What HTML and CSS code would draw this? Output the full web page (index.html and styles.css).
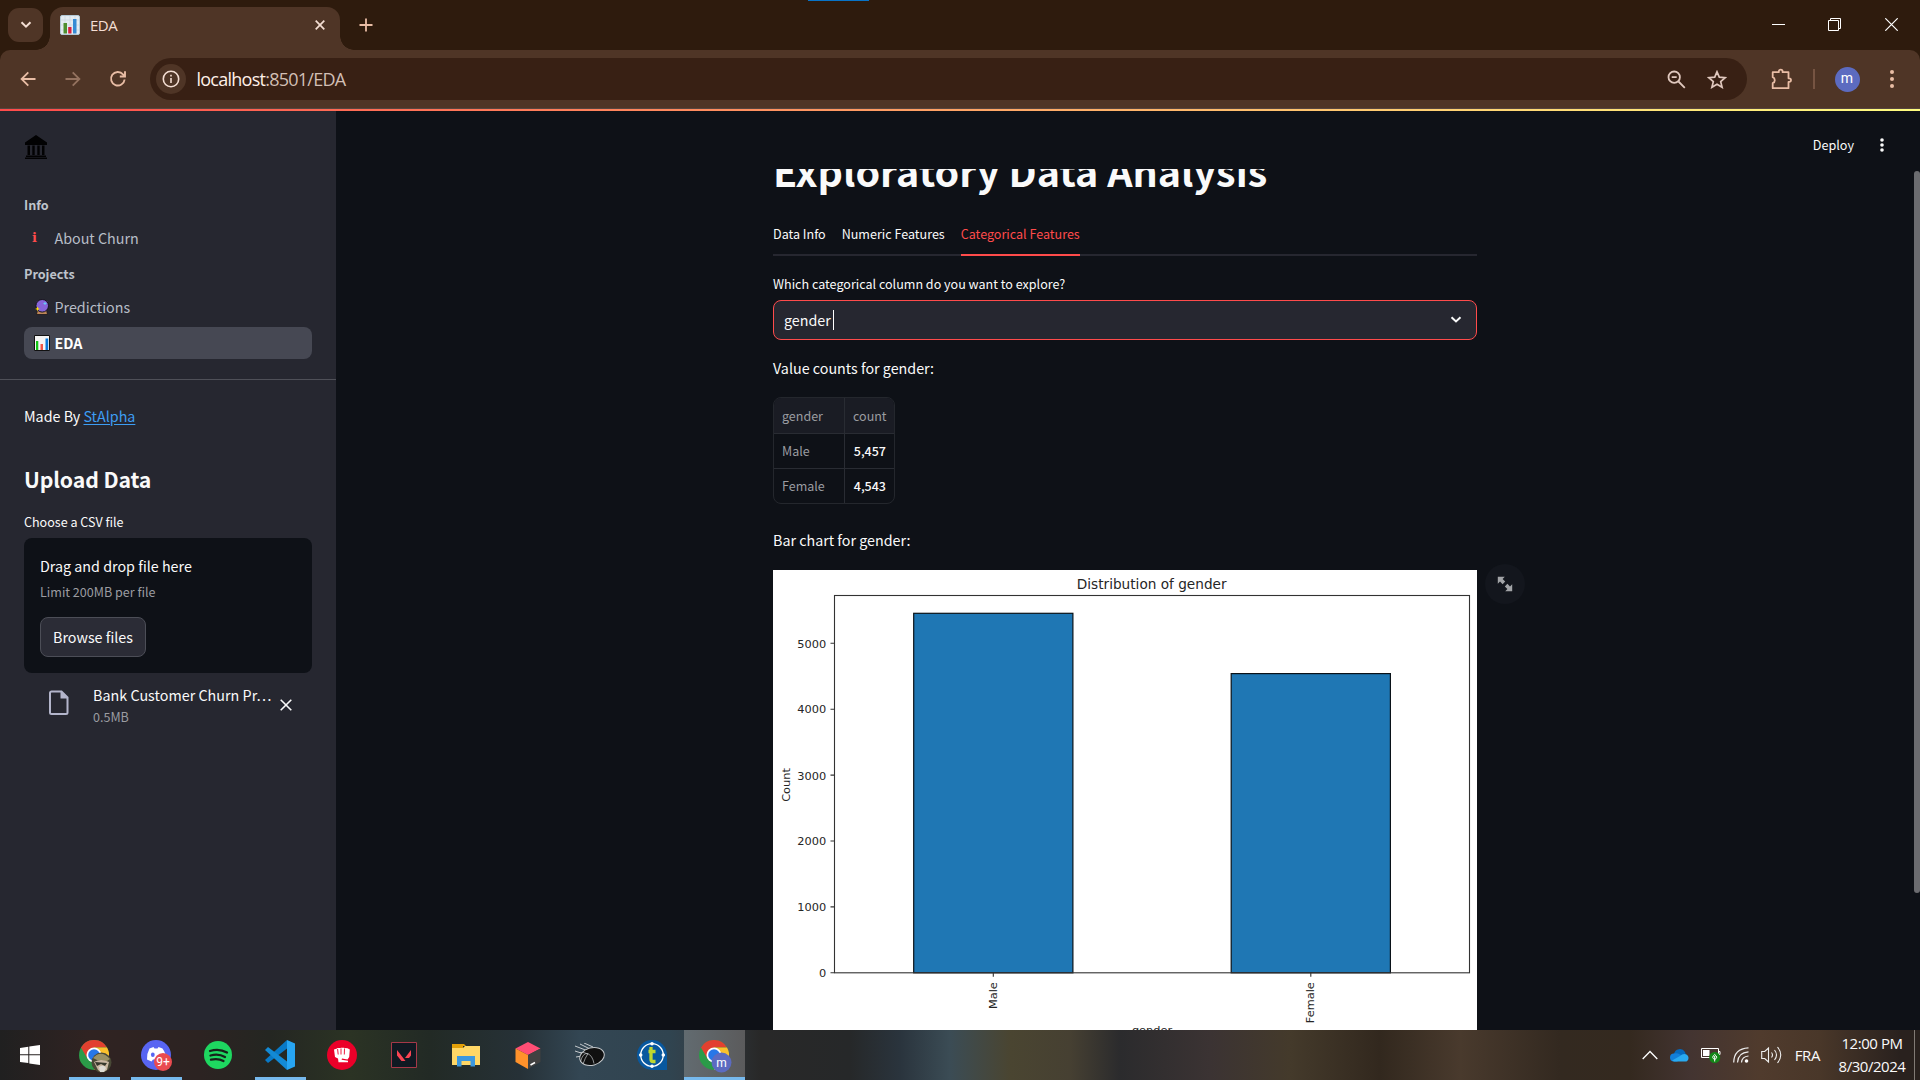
FILE: index.html
```html
<!DOCTYPE html>
<html lang="en">
<head>
<meta charset="utf-8">
<title>EDA</title>
<link rel="stylesheet" href="styles.css">
</head>
<body>
<svg width="0" height="0" class="defs">
  <defs>
    <symbol id="chart" viewBox="0 0 20 20"><rect x=".5" y=".5" width="19" height="19" rx="1.5" fill="#e4ecf2" stroke="#b4c9d6"/><path d="M1 5h18M1 10h18M1 15h18M5 1v18M10 1v18M15 1v18" stroke="#ccd7df" stroke-width=".7"/><path fill="#4f8f2f" d="M3.500 8H7v10.500H3.500z"/><path fill="#d9203f" d="M8.200 12h3.300v6.500H8.200z"/><path fill="#348bd5" d="M13 4h3.500v14.500H13z"/></symbol>
    <symbol id="chrome" viewBox="0 0 30 30"><circle cx="15" cy="15" r="15" fill="#2b9b48"/><path d="M2 7.500A15 15 0 0 1 28 7.500H15L8.500 18.800z" fill="#e2402f"/><path d="M28 7.500A15 15 0 0 1 15 30L21.500 18.800 15 7.500z" fill="#fbc12d"/><circle cx="15" cy="15" r="7.500" fill="#fff"/><circle cx="15" cy="15" r="5.800" fill="#2777e8"/></symbol>
  </defs>
</svg>

<header class="tabstrip">
  <button class="tab-search"><svg width="12" height="8" viewBox="0 0 12 8"><path d="M1.500 1.200 6 5.700l4.500-4.500" fill="none" stroke="currentColor" stroke-width="2"/></svg></button>
  <div class="tab"><svg width="20" height="20"><use href="#chart"/></svg><span>EDA</span><svg class="tab-close" width="10" height="10" viewBox="0 0 10 10"><path d="m.7.7 8.600 8.600M9.300.7.7 9.300" stroke="currentColor" stroke-width="1.700"/></svg></div>
  <svg class="new-tab" width="14" height="14" viewBox="0 0 14 14"><path d="M7 .5v13M.5 7h13" stroke="currentColor" stroke-width="1.800"/></svg>
  <div class="window-buttons">
    <svg width="13" height="13" viewBox="0 0 13 13"><path d="M0 6.500h13" stroke="currentColor"/></svg>
    <svg width="13" height="13" viewBox="0 0 13 13"><path d="M.5 2.500h10v10H.5zM2.500 2.500v-2h10v10h-2" fill="none" stroke="currentColor"/></svg>
    <svg width="13" height="13" viewBox="0 0 13 13"><path d="m.3.3 12.400 12.400M12.700.3.3 12.700" stroke="currentColor" stroke-width="1.200"/></svg>
  </div>
</header>

<nav class="toolbar">
  <svg width="16" height="16" viewBox="0 0 16 16"><path d="M15.500 8H2M8.300 1.300 1.600 8l6.700 6.700" fill="none" stroke="currentColor" stroke-width="1.800"/></svg>
  <svg class="disabled" width="16" height="16" viewBox="0 0 16 16"><path d="M.5 8H14M7.700 1.300 14.400 8l-6.700 6.700" fill="none" stroke="currentColor" stroke-width="1.800"/></svg>
  <svg class="reload" width="18" height="18" viewBox="0 0 18 18"><path d="M15.600 9.500A6.800 6.800 0 1 1 14 4.300l1.500 1.500M16 1.300v5.200h-5.200" fill="none" stroke="currentColor" stroke-width="1.900"/></svg>
  <div class="omnibox">
    <span class="site-info"><svg width="18" height="18" viewBox="0 0 18 18"><circle cx="9" cy="9" r="7.700" fill="none" stroke="currentColor" stroke-width="1.600"/><path d="M9 8v5M9 4.800v1.800" stroke="currentColor" stroke-width="1.600"/></svg></span>
    <span class="url"><b>localhost</b>:8501/EDA</span>
    <svg class="zoom-icon" width="19" height="19" viewBox="0 0 19 19"><circle cx="7.200" cy="7.200" r="5.700" fill="none" stroke="currentColor" stroke-width="1.800"/><path d="M4.700 7.200h5M11.500 11.500l6.300 6.300" stroke="currentColor" stroke-width="1.800"/></svg>
    <svg width="20" height="19" viewBox="0 0 20 19"><path d="m10 1.800 2.300 5.400 5.900.5-4.500 3.900 1.400 5.700-5.100-3-5.100 3 1.400-5.700L1.800 7.700l5.900-.5z" fill="none" stroke="currentColor" stroke-width="1.700"/></svg>
  </div>
  <svg class="puzzle" width="22" height="22" viewBox="0 0 22 22"><path d="M1.700 4.200h6.100v-.7a1.900 1.900 0 0 1 3.800 0v.7h5.900v6.100h.7a1.800 1.800 0 0 1 0 3.600h-.7v6.300H1.700v-5a3.200 3.200 0 0 0 0-6z" fill="none" stroke="currentColor" stroke-width="1.800" stroke-linejoin="round"/></svg>
  <i class="separator"></i>
  <span class="avatar">m</span>
  <svg class="menu" width="4" height="18" viewBox="0 0 4 18"><g fill="currentColor"><circle cx="2" cy="2" r="2"/><circle cx="2" cy="9" r="2"/><circle cx="2" cy="16" r="2"/></g></svg>
</nav>

<div class="decoration"></div>

<div class="app">
  <aside class="sidebar">
    <svg class="logo" width="22" height="24" viewBox="0 0 22 24"><path d="M11 0 0 7.500V10h22V7.500zM2.500 10.500H5V20H2.500zM7.300 10.500h2.400V20H7.300zM12.300 10.500h2.400V20h-2.400zM17 10.500h2.500V20H17zM1 20.500h20v1.500H1zM0 22.500h22V24H0z" fill="#020203"/></svg>
    <h4>Info</h4>
    <a class="nav-item"><i class="info-letter">i</i><span>About Churn</span></a>
    <h4 class="second">Projects</h4>
    <a class="nav-item"><svg width="16" height="16" viewBox="0 0 16 16"><path d="M3.500 11h9l1 4.500h-11z" fill="#bd8758" stroke="#17131b" stroke-width=".8"/><circle cx="8.200" cy="6.800" r="6.300" fill="#8664d8" stroke="#17131b"/><path d="M11 3v3M9.500 4.500h3" stroke="#67c8f5"/><path d="m3.500 7.500.7 1.700 1.700.7-1.700.7-.7 1.700-.7-1.700-1.700-.7 1.700-.7z" fill="#ffe100"/></svg><span>Predictions</span></a>
    <a class="nav-item active"><svg width="16" height="16" viewBox="0 0 16 16"><path d="M.5.5h15v15H.5z" fill="#f4f4f4" stroke="#111"/><path d="M2 6h2.300v9H2z" fill="#13c515"/><path d="M6.500 9H9v6H6.500z" fill="#f05545"/><path d="M11.500 3.500h2.700V15h-2.700z" fill="#0879da"/></svg><span>EDA</span></a>
    <hr>
    <p class="made">Made By <a>StAlpha</a></p>
    <h2>Upload Data</h2>
    <label>Choose a CSV file</label>
    <section class="dropzone">
      <div class="drop-title">Drag and drop file here</div>
      <div class="small">Limit 200MB per file</div>
      <button>Browse files</button>
    </section>
    <div class="file">
      <svg width="20" height="25" viewBox="0 0 20 25"><path d="M2.500 1.500h10l6 6v15a1.500 1.500 0 0 1-1.500 1.500H2.500A1.500 1.500 0 0 1 1 22.500V3a1.500 1.500 0 0 1 1.500-1.500z" fill="none" stroke="#b3b5cb" stroke-width="2"/><path d="M11.500 1v7.500H19z" fill="#b3b5cb"/></svg>
      <div class="file-text"><div class="file-name">Bank Customer Churn Pr…</div><div class="small">0.5MB</div></div>
      <svg class="remove" width="12" height="12" viewBox="0 0 12 12"><path d="m.7.7 10.600 10.600M11.300.7.7 11.300" stroke="#fafafa" stroke-width="1.600"/></svg>
    </div>
  </aside>

  <div class="page">
    <div class="page-header"><span>Deploy</span><svg width="4" height="14" viewBox="0 0 4 14"><g fill="#fafafa"><circle cx="2" cy="2" r="1.800"/><circle cx="2" cy="7" r="1.800"/><circle cx="2" cy="12" r="1.800"/></g></svg></div>
    <main class="scroll">
      <div class="column">
        <h1>Exploratory Data Analysis</h1>
        <div class="tabs"><span>Data Info</span><span>Numeric Features</span><span class="selected">Categorical Features</span></div>
        <label>Which categorical column do you want to explore?</label>
        <div class="select"><span>gender</span><i class="caret"></i><svg width="12" height="8" viewBox="0 0 12 8"><path d="M1.500 1.300 6 5.500l4.500-4.200" fill="none" stroke="#fafafa" stroke-width="2"/></svg></div>
        <p class="caption">Value counts for gender:</p>
        <table>
          <tr><th>gender</th><th>count</th></tr>
          <tr><td>Male</td><td>5,457</td></tr>
          <tr><td>Female</td><td>4,543</td></tr>
        </table>
        <p class="caption bar-caption">Bar chart for gender:</p>
        <figure>
          <svg class="plot" width="704" height="480" viewBox="0 0 704 480">
            <rect width="704" height="480" fill="#fff"/>
            <g fill="#1f77b4" stroke="#0a1218" stroke-width="1.200">
              <rect x="140.700" y="43.300" width="159.200" height="359.500"/>
              <rect x="458.200" y="103.600" width="159.200" height="299.200"/>
            </g>
            <rect x="61.500" y="25.500" width="635" height="377.300" fill="none" stroke="#333" stroke-width="1.100"/>
            <path d="M57.500 402.700h4M57.500 336.900h4M57.500 271h4M57.500 205.100h4M57.500 139.200h4M57.500 73.300h4M220.300 402.700v4M537.800 402.700v4" stroke="#333" stroke-width="1.100"/>
            <g class="ticks" text-anchor="end">
              <text x="53.200" y="407.300">0</text><text x="53.200" y="341.300">1000</text><text x="53.200" y="275.400">2000</text><text x="53.200" y="209.500">3000</text><text x="53.200" y="143.400">4000</text><text x="53.200" y="77.700">5000</text>
              <text transform="translate(224 412.200) rotate(-90)">Male</text>
              <text transform="translate(541 412.200) rotate(-90)">Female</text>
            </g>
            <g class="ticks" text-anchor="middle">
              <text transform="translate(17.200 215) rotate(-90)">Count</text>
              <text x="379" y="464">gender</text>
              <text class="plot-title" x="378.700" y="18.700">Distribution of gender</text>
            </g>
          </svg>
          <button class="fullscreen"><svg width="16" height="16" viewBox="0 0 16 16"><path d="M.8.8h7L5.600 3l2.600 2.600-2.600 2.600L3 5.600.8 7.800zM15.200 15.200h-7l2.200-2.200L7.800 10.400l2.600-2.600L13 10.400l2.200-2.200z" fill="#a2a4a7"/></svg></button>
        </figure>
      </div>
    </main>
    <i class="scrollbar"></i>
  </div>
</div>

<footer class="taskbar">
  <div class="start"><svg width="20" height="20" viewBox="0 0 20 20"><path d="M0 3 8.300 1.800v7.500H0zM9.300 1.600 20 0v9.300H9.300zM0 10.300h8.300v7.800L0 17zM9.300 10.300H20V20L9.300 18.400z" fill="#fff"/></svg></div>
  <div class="task running badged"><svg width="33" height="33" viewBox="0 0 33 33"><use href="#chrome" width="30" height="30"/><circle cx="22.500" cy="22.500" r="10" fill="#494936"/><path d="M14 18q8-9 17 1l-3 2-10-1z" fill="#9a9165"/><path d="M15 22q7-4 15 0l-2 8q-5 4-9 0z" fill="#c9b7a2"/><path d="m16 22 12 1-2 3-4-2-4 2z" fill="#36382c"/><path d="M20 27q5-3 7 1l-2 4h-4z" fill="#dedbd4"/></svg></div>
  <div class="task running badged"><svg width="33" height="33" viewBox="0 0 33 33"><circle cx="15" cy="15" r="15" fill="#5865f2"/><path d="M8.500 8.500 12.500 7l1 1.500h3l1-1.500 4 1.500q4 5.500 3.500 11l-4.500 2-1.500-2h-7l-1.500 2-4.500-2q-.5-5.500 2.500-11z" fill="#fff"/><ellipse cx="11.800" cy="14.700" rx="1.900" ry="2.200" fill="#5865f2"/><circle cx="22" cy="22" r="9" fill="#e94b50"/><text x="22" y="26" class="badge">9+</text></svg></div>
  <div class="task"><svg width="28" height="28" viewBox="0 0 28 28"><circle cx="14" cy="14" r="14" fill="#1ed760"/><path d="M6 10q9-3 17 1.500M6.500 14.500q8-2.300 14.500 1.500M7 18.700q7-1.700 12.500 1.300" stroke="#17211a" fill="none" stroke-width="2.300" stroke-linecap="round"/></svg></div>
  <div class="task running"><svg width="30" height="30" viewBox="0 0 30 30"><path d="m0 20 22-20v8.500L3 23z" fill="#0879c7"/><path d="m0 10 3-3 19 14.500V30z" fill="#138ad5"/><path d="m22 0 8 3.500v23L22 30z" fill="#27a5f2"/></svg></div>
  <div class="task"><svg width="30" height="30" viewBox="0 0 30 30"><circle cx="15" cy="15" r="15" fill="#eb0029"/><path d="m7 9.500 3-1 .5-.5h3l.5-.3h3l.5.3 3 .3 2.300 1.200-.6 7.500-1.700 2.500-5.500-1-.4 1.200 6.400 1v1.600H11.500L11 18.500 8 17z" fill="#fff"/><path d="m10.600 9 .6 5.500M14 8.500v6M17.500 8.500l-.2 6" stroke="#eb0029" stroke-width=".9"/></svg></div>
  <div class="task"><svg width="26" height="26" viewBox="0 0 26 26"><path d="M.5.500h25v25H.5z" fill="#101922" stroke="#a53848"/><path d="m6 8 8.500 11h-4L6 13.500zM20 8v5.500L18 16h-4z" fill="#fa4553"/></svg></div>
  <div class="task"><svg width="28" height="24" viewBox="0 0 28 24"><path d="M0 1h12l2 2h-3v2H0z" fill="#e3a008"/><path d="M0 5h11l2-2h15v19H0z" fill="#ffd766"/><path d="M5 23.500V13h18v10.500h-4.500V18h-9v5.500z" fill="#3c98de"/></svg></div>
  <div class="task"><svg width="26" height="27" viewBox="0 0 26 27"><path d="m13 0 12.500 6.500L13 13 .5 6.500z" fill="#ff4e75"/><path d="M.5 6.500 13 13v14L.5 20z" fill="#ff922b"/><path d="M25.500 6.500 13 13v14l12.500-7z" fill="#414141"/><path d="m15.500 23 4.500-2.500" stroke="#fff" stroke-width="1.500"/></svg></div>
  <div class="task"><svg width="30" height="24" viewBox="0 0 30 24"><g fill="none" stroke="#c4c8cb" stroke-width="1"><path d="m0 3 13 5M5 1l10 5M0 8l9 3M9 0l9 4M1 14l6-1"/><ellipse cx="17" cy="13.500" rx="12.500" ry="8.700" transform="rotate(-15 17 13.500)" fill="#101010"/><path d="M5.500 19q2-9 7-8.500 5 2 6.500 10M8 21q2-6 5-10.500M5 9.500q4-.5 8 1.500" stroke-width=".7"/></g></svg></div>
  <div class="task"><svg width="30" height="30" viewBox="0 0 30 30"><path d="M15 0a15 15 0 1 0 0 30h15V15A15 15 0 0 0 15 0z" fill="#08589f"/><circle cx="15" cy="15" r="11.300" fill="none" stroke="#fff" stroke-width="1.300"/><g fill="#fff"><circle cx="15" cy="3.700" r="1.800"/><circle cx="15" cy="26.300" r="1.800"/><circle cx="3.700" cy="15" r="1.800"/><circle cx="26.300" cy="15" r="1.800"/></g><path d="M14 7v12.500q0 2 2 2h2.500M11.500 11.500h7" fill="none" stroke="#bfd730" stroke-width="3.300"/></svg></div>
  <div class="task running focused badged"><svg width="33" height="33" viewBox="0 0 33 33"><use href="#chrome" width="30" height="30"/><circle cx="22.500" cy="22.500" r="10" fill="#5c6bc0"/><text x="22.500" y="26.500" class="badge">m</text></svg></div>

  <div class="tray">
    <svg width="16" height="10" viewBox="0 0 16 10"><path d="m.7 9 7.300-7.500L15.300 9" fill="none" stroke="#fff" stroke-width="1.300"/></svg>
    <svg width="20" height="14" viewBox="0 0 20 14"><path d="M4 6a6 6 0 0 1 11-2l1 3-8 3-4 2A4 4 0 0 1 4 5.500z" fill="#0669bd"/><path d="M4 5.500q3-1 6 1l5 3-8 4H4a4 4 0 0 1 0-8z" fill="#127fda"/><path d="m2 12.500 8-4.500q3-3 6.500-1.500a4 4 0 0 1 0 7H4z" fill="#29aaf0"/></svg>
    <svg class="battery" width="20" height="16" viewBox="0 0 20 16"><path d="M.5 1.500h17v9H.5zM18 4.500h1v3h-1" fill="none" stroke="#fff"/><path d="M2 3h6.500v6H2z" fill="#fff"/><circle cx="13.700" cy="10.500" r="5.500" fill="#138718"/><path d="M13.700 7.500q-4 3 0 5 4-2 0-5zM13.700 9v5.500" stroke="#fff" fill="none"/></svg>
    <svg width="16" height="16" viewBox="0 0 16 16"><path d="M.7 15.500Q1 1.500 15.500.8M4.500 15.500Q5 5.500 15.500 4.800M8.500 15.500q.5-6 7-6.500" fill="none" stroke="#eee" stroke-width="1.200"/><circle cx="13.500" cy="14" r="1.800" fill="#fff"/></svg>
    <svg width="21" height="18" viewBox="0 0 21 18"><path d="M.7 5.500h3L7.500 2v14l-3.800-3.500h-3zM10.500 6.500q2 2.500 0 5M13.500 4q4 5 0 10M16.500 1q6.500 8 0 16" fill="none" stroke="#eee" stroke-width="1.100"/></svg>
    <span class="language">FRA</span>
    <div class="clock"><div>12:00 PM</div><div>8/30/2024</div></div>
  </div>
</footer>
</body>
</html>
```
FILE: styles.css
```css
* { box-sizing: border-box; }
body {
  margin: 0; width: 1920px; height: 1080px; overflow: hidden;
  display: flex; flex-direction: column;
  background: #0e1117; color: #fafafa;
  font: 14.3px/24px "Noto Sans CJK SC", "Noto Sans", sans-serif;
}
.defs { position: absolute; }
svg { display: block; flex: none; }
button { font: inherit; color: inherit; border: 0; padding: 0; margin: 0; }
h1, h2, h4, p, figure { margin: 0; }
label { display: block; font-size: 12.55px; line-height: 20px; }

/* Browser chrome */
.tabstrip {
  height: 50px; flex: none; display: flex; background: #2e1b0d; color: #f4ded3; position: relative;
  font-family: "Open Sans", sans-serif; box-shadow: 0 10px #2e1b0d;
}
.tabstrip::after { content: ""; position: absolute; left: 808px; top: 0; width: 61px; height: 1px; background: #0873c7; }
.tab-search { width: 35px; height: 34px; margin: 8px 7px 0 8px; border-radius: 11px; background: #4f3526; display: grid; place-items: center; }
.tab {
  width: 290px; height: 43px; margin-top: 7px; padding: 0 15px 7px 10px; position: relative;
  display: flex; align-items: center; border-radius: 13px 13px 0 0; background: #4f3526;
}
.tab::before, .tab::after { content: ""; position: absolute; bottom: 0; width: 14px; height: 14px; }
.tab::before { left: -14px; background: radial-gradient(circle at 0 0, #0000 13.500px, #4f3526 14px); }
.tab::after { right: -14px; background: radial-gradient(circle at 100% 0, #0000 13.500px, #4f3526 14px); }
.tab span { margin-left: 10px; font-size: 15px; letter-spacing: -.5px; }
.tab-close { margin-left: auto; }
.new-tab { margin: 18px 0 0 18.500px; color: #e9bda5; }
.window-buttons { margin: 18px 22px 0 auto; display: flex; gap: 44px; color: #fff; }
.window-buttons svg:nth-child(2) { margin-left: -.5px; }
.toolbar {
  height: 59px; flex: none; display: flex; align-items: center; padding: 0 26px 0 20px; position: relative;
  background: #4f3526; color: #e9bda5; border-radius: 10px 10px 0 0; border-bottom: 1px solid #56453f;
}
.disabled { margin-left: 29px; opacity: .45; }
.reload { margin-left: 27.500px; }
.omnibox { width: 1597px; height: 42px; margin-left: 23.500px; border-radius: 21px; background: #382014; display: flex; align-items: center; padding: 0 20px 0 6px; color: #e0c8be; }
.site-info { width: 30px; height: 30px; border-radius: 50%; background: #4f3526; display: grid; place-items: center; color: #f4ded3; }
.url { margin-left: 10.500px; font: 18px/24px "Open Sans", sans-serif; letter-spacing: -.75px; color: #d2bfb5; }
.url b { font-weight: 400; color: #fff0e8; }
.zoom-icon { margin: 0 21px 0 auto; }
.puzzle { margin-left: 23.500px; }
.separator { width: 2px; height: 20px; margin-left: 20px; background: #765442; }
.avatar { width: 25px; height: 25px; margin-left: 20px; border-radius: 50%; background: #5c6bc0; color: #fff; font: 14px/23px Roboto, sans-serif; text-align: center; }
.menu { margin-left: auto; }
.decoration { height: 2px; flex: none; background: linear-gradient(90deg, #ff4b4b, #fffd80); }

/* Application */
.app { flex: 1; min-height: 0; display: flex; }
.sidebar { width: 336px; background: #262730; padding: 24px 24px 0; }
.logo { margin-left: 1px; }
.sidebar h4 { margin-top: 35px; font-size: 12.6px; line-height: 21px; font-weight: 700; color: #bec3cb; }
.sidebar h4.second { margin-top: 9px; }
.nav-item { display: flex; align-items: center; height: 32px; margin-top: 7px; padding-left: 9.500px; border-radius: 8px; color: #b7bdc7; }
.nav-item span { margin-left: 5px; line-height: 24px; }
.info-letter { width: 16px; padding-left: 1px; font: bold 13px/20px "DejaVu Serif", serif; color: #ff4b4b; text-align: left; text-indent: -2.500px; }
.nav-item.active { margin-top: 4px; background: #464853; font-weight: 700; color: #fff; }
.sidebar hr { height: 1px; margin: 20px -24px 24px; border: 0; background: #4f5058; }
.made { line-height: 24px; }
.made a { color: #3d9df3; text-decoration: underline; text-underline-offset: 2px; }
.sidebar h2 { margin: 36px 0 19px; font-size: 21.2px; line-height: 29px; letter-spacing: -.1px; }
.dropzone { height: 135px; margin-top: 6px; padding: 16px; border-radius: 8px; background: #0e1117; }
.small { font-size: 12.55px; line-height: 21px; color: #9b9ca1; }
.drop-title { line-height: 24px; margin-bottom: 3px; }
.dropzone button { width: 106px; height: 40px; margin-top: 15px; display: block; border: 1px solid #4c4e57; border-radius: 8px; background: #2b2c36; }
.file { display: flex; padding: 10px 20px 0 24.500px; height: 60px; }
.file > svg:first-child { margin-top: 7px; }
.file-text { margin-left: 24.500px; width: 180px; white-space: nowrap; }
.file-name { line-height: 23px; letter-spacing: .03px; }
.file .small { line-height: 21px; }
.remove { margin: 16px 0 0 8px; }
.page { flex: 1; position: relative; display: flex; flex-direction: column; }
.page-header { height: 58px; flex: none; display: flex; align-items: center; justify-content: flex-end; gap: 26px; padding: 10px 36px 0 0; font-size: 12.6px; }
.scroll { flex: 1; min-height: 0; overflow: hidden; }
.column { width: 704px; margin-left: 437px; }
h1 { margin-top: -24px; height: 54px; font-size: 39.45px; line-height: 49px; font-weight: 700; white-space: nowrap; }
.tabs { height: 40px; margin-top: 17px; display: flex; gap: 16px; border-bottom: 2px solid #262730; font-size: 12.56px; line-height: 35px; }
.tabs span { height: 40px; white-space: nowrap; }
.tabs .selected { color: #ff4b4b; border-bottom: 2px solid #ff4b4b; }
.column label { margin-top: 18px; }
.select { height: 40px; margin-top: 6px; padding: 0 14px 0 10px; display: flex; align-items: center; border: 1px solid #ff4b4b; border-radius: 8px; background: #262730; }
.select span { line-height: 24px; }
.caret { width: 1px; height: 20px; margin-left: 2px; background: #fff; }
.select svg { margin-left: auto; }
.caption { margin-top: 16px; line-height: 24px; }
table { width: 122px; margin-top: 17px; border: 1px solid #24272d; border-radius: 8px; border-spacing: 0; table-layout: fixed; overflow: hidden; font-size: 12.5px; line-height: 20px; color: #9a9ca1; }
th, td { height: 35px; padding: 0 8px 1px; font-weight: 400; text-align: left; border-bottom: 1px solid #292c33; }
th { height: 36px; padding: 1px 8px 0; background: #1a1c24; }
tr:last-child td { border-bottom: 0; height: 34px; }
th:first-child, td:first-child { width: 71px; border-right: 1px solid #292c33; }
th:last-child, td:last-child { text-align: right; }
td:last-child { color: #fafafa; font-weight: 500; }
.bar-caption { margin-top: 24px; }
figure { margin-top: 18px; position: relative; }
.ticks { font: 11.35px "DejaVu Sans", sans-serif; fill: #262626; }
.plot-title { font-size: 13.65px; }
.fullscreen { position: absolute; left: 712px; top: -6px; width: 40px; height: 40px; border-radius: 50%; background: #13161d; display: grid; place-items: center; }
.scrollbar { position: absolute; right: 0; top: 60px; width: 6px; height: 722px; border-radius: 3px; background: #6b6c70; }

/* Taskbar */
.taskbar {
  height: 50px; flex: none; display: flex; align-items: center; font-family: "Open Sans", sans-serif;
  background: linear-gradient(90deg, #202020 0, #302322 90px, #2c2322 200px, #242622 270px, #2b3324 350px, #222a25 430px, #263137 520px, #334653 580px, #304450 670px, #334049 690px, #282828 760px, #262829 850px, #2a343d 900px, #3b4c55 950px, #4a4531 1010px, #464032 1070px, #2b2b2d 1120px, #3b3333 1210px, #443a2b 1290px, #32281e 1380px, #493a2d 1460px, #332920 1560px, #34291f 1630px, #433431 1690px, #503b2d 1760px, #493729 1820px, #29211e 1900px);
}
.start { width: 64px; padding-left: 20px; }
.task { width: 61px; height: 50px; margin-right: 1px; display: grid; place-items: center; position: relative; }
.task svg { margin-right: 2px; }
.badged svg { margin: 2px 0 0 2px; }
.running::after { content: ""; position: absolute; left: 5px; bottom: 0; width: 51px; height: 3px; background: #76b9ed; }
.focused { background: linear-gradient(90deg, #626b70, #5b5b5c); }
.focused::after { left: 0; width: 61px; }
.badge { fill: #fff; font: 12px Roboto, sans-serif; text-anchor: middle; }
.tray { margin-left: auto; height: 50px; padding-right: 5px; display: flex; align-items: center; gap: 12px; }
.tray .battery { margin-left: -1px; }
.language { margin-left: 1px; font-size: 15px; letter-spacing: -.4px; }
.clock { width: 83px; padding: 2px 2px 0 0; border-right: 1px solid #817a75; font-size: 15px; line-height: 23px; letter-spacing: -.45px; text-align: center; height: 50px; white-space: nowrap; }
```
